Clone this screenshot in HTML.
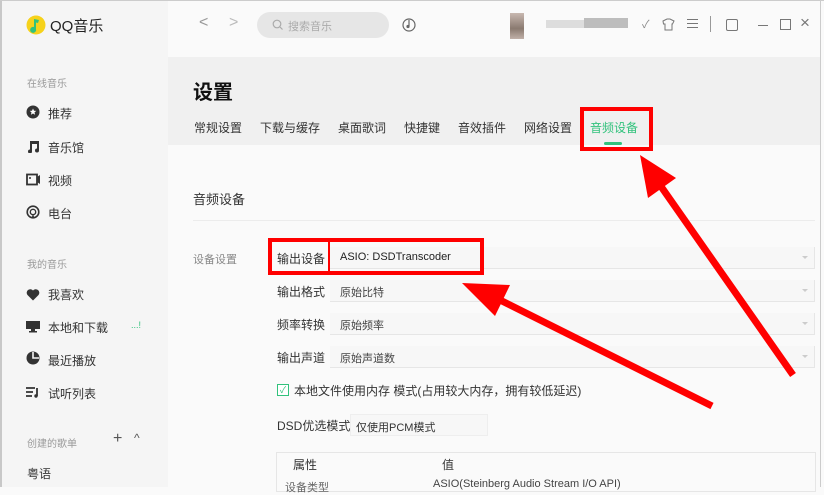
<!DOCTYPE html>
<html><head><meta charset="utf-8"><style>
*{margin:0;padding:0;box-sizing:border-box}
body{width:824px;height:487px;overflow:hidden;background:#fafafa;font-family:"Liberation Sans","Noto Sans CJK SC",sans-serif;position:relative;color:#333}
.a{position:absolute;white-space:nowrap}
.side{left:0;top:0;width:168px;height:487px;background:#f5f5f5;border-left:2px solid #c8c8c8;border-top:1px solid #ccc}
.nav{font-size:12px;color:#333}
.grp{font-size:10px;color:#999}
.dd{left:330px;width:485px;height:22px;background:#f7f7f7;border-bottom:1px solid #e6e6e6;border-right:1px solid #e6e6e6;font-size:11px;color:#444;padding:4px 0 0 10px}
.dd::after{content:"";position:absolute;right:6px;top:9px;border:3px solid transparent;border-top:3px solid #ccc}
.lbl{font-size:12px;color:#333;left:277px}
.red{border:4px solid #f00}
</style></head><body>
<div class="a side"></div>
<div class="a" style="left:0;top:0;width:824px;height:1px;background:#ccc"></div>
<div class="a" style="right:3px;top:0;width:1px;height:487px;background:#ccc"></div>
<svg class="a" style="left:26px;top:15px" width="20" height="20"><circle cx="10" cy="10" r="9.5" fill="#f6d21b"/><path d="M8 4 L13 5 L12 8 L10 7.5 L10 14 A3 3 0 1 1 8 12Z" fill="#31c27c"/></svg>
<div class="a" style="left:50px;top:15px;font-size:15px;color:#222">QQ音乐</div>
<div class="a grp" style="left:27px;top:75px">在线音乐</div>
<svg class="a" style="left:26px;top:105px" width="14" height="14"><circle cx="7" cy="7" r="6.5" fill="#333"/><path d="M7 3.5l1 2.2 2.3.2-1.8 1.5.6 2.3L7 8.5 4.9 9.7l.6-2.3L3.7 5.9 6 5.7z" fill="#fff"/></svg>
<div class="a nav" style="left:48px;top:105px">推荐</div>
<svg class="a" style="left:26px;top:139px" width="14" height="14"><path d="M4 2h9v9.5a2 2 0 1 1-2-2V5H6v7.5a2 2 0 1 1-2-2z" fill="#333"/></svg>
<div class="a nav" style="left:48px;top:139px">音乐馆</div>
<svg class="a" style="left:26px;top:173px" width="15" height="13"><rect x="1" y="1.5" width="10" height="10" fill="none" stroke="#333" stroke-width="1.8"/><path d="M11 4l3-2v9l-3-2z" fill="#333"/><circle cx="4" cy="5" r="1" fill="#333"/></svg>
<div class="a nav" style="left:48px;top:172px">视频</div>
<svg class="a" style="left:26px;top:205px" width="14" height="14"><circle cx="7" cy="7" r="5.8" fill="none" stroke="#333" stroke-width="1.6"/><circle cx="7" cy="7" r="2.7" fill="none" stroke="#333" stroke-width="1.4"/><path d="M5.5 13.5L7 8.5 8.5 13.5z" fill="#333"/></svg>
<div class="a nav" style="left:48px;top:205px">电台</div>
<div class="a grp" style="left:27px;top:256px">我的音乐</div>
<svg class="a" style="left:26px;top:288px" width="14" height="13"><path d="M7 12.5L1.5 7A3.2 3.2 0 0 1 7 2.5 3.2 3.2 0 0 1 12.5 7z" fill="#333"/></svg>
<div class="a nav" style="left:48px;top:286px">我喜欢</div>
<svg class="a" style="left:26px;top:320px" width="14" height="13"><rect x="0" y="1" width="14" height="8" fill="#333"/><rect x="5" y="9" width="4" height="3" fill="#333"/><rect x="3" y="11" width="8" height="1.5" fill="#333"/></svg>
<div class="a nav" style="left:48px;top:319px">本地和下载</div>
<div class="a" style="left:131px;top:320px;font-size:9px;color:#31c27c">...!</div>
<svg class="a" style="left:26px;top:351px" width="14" height="14"><circle cx="7" cy="7" r="6.5" fill="#333"/><path d="M7 1v6h6" fill="none" stroke="#f5f5f5" stroke-width="1.6"/></svg>
<div class="a nav" style="left:48px;top:352px">最近播放</div>
<svg class="a" style="left:26px;top:386px" width="14" height="12"><path d="M0 2h9M0 6h7M0 10h6" stroke="#333" stroke-width="1.8"/><path d="M11 2v8" stroke="#333" stroke-width="1.8"/><circle cx="10" cy="10" r="1.7" fill="#333"/></svg>
<div class="a nav" style="left:48px;top:385px">试听列表</div>
<div class="a grp" style="left:27px;top:435px">创建的歌单</div>
<div class="a" style="left:113px;top:430px;font-size:16px;color:#555">+</div>
<div class="a" style="left:134px;top:431px;font-size:12px;color:#555">^</div>
<div class="a nav" style="left:27px;top:465px">粤语</div>
<div class="a" style="left:199px;top:14px;font-size:16px;color:#999">&lt;</div>
<div class="a" style="left:229px;top:14px;font-size:16px;color:#bbb">&gt;</div>
<div class="a" style="left:257px;top:12px;width:132px;height:26px;border-radius:13px;background:#e6e6e6"></div>
<svg class="a" style="left:272px;top:19px" width="11" height="11"><circle cx="5" cy="5" r="3.8" fill="none" stroke="#aaa" stroke-width="1.2"/><path d="M8 8l2.5 2.5" stroke="#aaa" stroke-width="1.2"/></svg>
<div class="a" style="left:288px;top:18px;font-size:11px;color:#aaa">搜索音乐</div>
<svg class="a" style="left:402px;top:17px" width="14" height="16"><circle cx="7" cy="8" r="6" fill="none" stroke="#666" stroke-width="1.2"/><path d="M7 3v6" stroke="#666" stroke-width="1.2"/><circle cx="6" cy="9.5" r="1.6" fill="#666"/></svg>
<div class="a" style="left:510px;top:13px;width:14px;height:26px;background:linear-gradient(#c8b8b0,#8a7a70 60%,#c0b0a8)"></div>
<div class="a" style="left:546px;top:20px;width:45px;height:8px;background:#ddd"></div>
<div class="a" style="left:584px;top:18px;width:44px;height:10px;background:#bdbdbd"></div>
<div class="a" style="left:642px;top:16px;font-size:11px;color:#888">✓</div>
<svg class="a" style="left:662px;top:18px" width="13" height="13"><path d="M1 3l4-2h3l4 2-1.5 3H10v6H3V6H1.5z" fill="none" stroke="#777" stroke-width="1"/></svg>
<div class="a" style="left:687px;top:19px;width:11px;height:1px;background:#777;box-shadow:0 4px #777,0 8px #777"></div>
<div class="a" style="left:710px;top:16px;width:1px;height:16px;background:#999"></div>
<div class="a" style="left:726px;top:19px;width:12px;height:12px;border:1.3px solid #777;border-radius:2px"></div>
<div class="a" style="left:758px;top:25px;width:10px;height:1px;background:#777"></div>
<div class="a" style="left:780px;top:19px;width:11px;height:11px;border:1.3px solid #777"></div>
<div class="a" style="left:800px;top:13px;font-size:17px;color:#777">×</div>
<div class="a" style="left:168px;top:57px;width:652px;height:88px;background:#f0f0f0"></div>
<div class="a" style="left:193px;top:76px;font-size:20px;font-weight:bold;color:#111">设置</div>
<div class="a" style="left:194px;top:119px;font-size:12px;color:#333">常规设置</div>
<div class="a" style="left:260px;top:119px;font-size:12px">下载与缓存</div>
<div class="a" style="left:338px;top:119px;font-size:12px">桌面歌词</div>
<div class="a" style="left:404px;top:119px;font-size:12px">快捷键</div>
<div class="a" style="left:458px;top:119px;font-size:12px">音效插件</div>
<div class="a" style="left:524px;top:119px;font-size:12px">网络设置</div>
<div class="a" style="left:590px;top:119px;font-size:12px;color:#31c27c">音频设备</div>
<div class="a" style="left:604px;top:142px;width:18px;height:3px;border-radius:2px;background:#31c27c"></div>
<div class="a red" style="left:580px;top:107px;width:73px;height:44px"></div>
<div class="a" style="left:193px;top:189px;font-size:13px;color:#333">音频设备</div>
<div class="a" style="left:193px;top:220px;width:622px;height:1px;background:#ececec"></div>
<div class="a" style="left:193px;top:251px;font-size:11px;color:#888">设备设置</div>
<div class="a dd" style="top:247px;font-size:11px;color:#222">ASIO: DSDTranscoder</div>
<div class="a dd" style="top:280px">原始比特</div>
<div class="a dd" style="top:313px">原始频率</div>
<div class="a dd" style="top:346px">原始声道数</div>
<div class="a lbl" style="top:250px">输出设备</div>
<div class="a lbl" style="top:283px">输出格式</div>
<div class="a lbl" style="top:316px">频率转换</div>
<div class="a lbl" style="top:349px">输出声道</div>
<div class="a red" style="left:268px;top:238px;width:216px;height:37px"></div>
<div class="a" style="left:328px;top:241px;width:2px;height:31px;background:#f00"></div>
<div class="a" style="left:277px;top:384px;width:12px;height:12px;border:1px solid #31c27c;background:#fff;font-size:9px;color:#31c27c;text-align:center;line-height:10px">✓</div>
<div class="a" style="left:294px;top:382px;font-size:12px;color:#333">本地文件使用内存 模式(占用较大内存，拥有较低延迟)</div>
<div class="a" style="left:277px;top:417px;font-size:12px;color:#333">DSD优选模式</div>
<div class="a" style="left:350px;top:414px;width:138px;height:22px;background:#f7f7f7;border:1px solid #eee;font-size:11px;padding:4px 0 0 5px">仅使用PCM模式</div>
<div class="a" style="left:276px;top:452px;width:540px;height:40px;border:1px solid #e6e6e6;background:#fafafa"></div>
<div class="a" style="left:293px;top:456px;font-size:12px">属性</div>
<div class="a" style="left:442px;top:456px;font-size:12px">值</div>
<div class="a" style="left:285px;top:479px;font-size:11px;color:#666">设备类型</div>
<div class="a" style="left:433px;top:478px;font-size:11px;color:#444">ASIO(Steinberg Audio Stream I/O API)</div>
<svg class="a" style="left:0;top:0" width="824" height="487">
<line x1="793" y1="375" x2="660" y2="185" stroke="#f00" stroke-width="7"/>
<polygon points="640,155 676,178 648,198" fill="#f00"/>
<line x1="712" y1="406" x2="500" y2="300" stroke="#f00" stroke-width="7"/>
<polygon points="462,283 510,285 495,316" fill="#f00"/>
</svg>
</body></html>
